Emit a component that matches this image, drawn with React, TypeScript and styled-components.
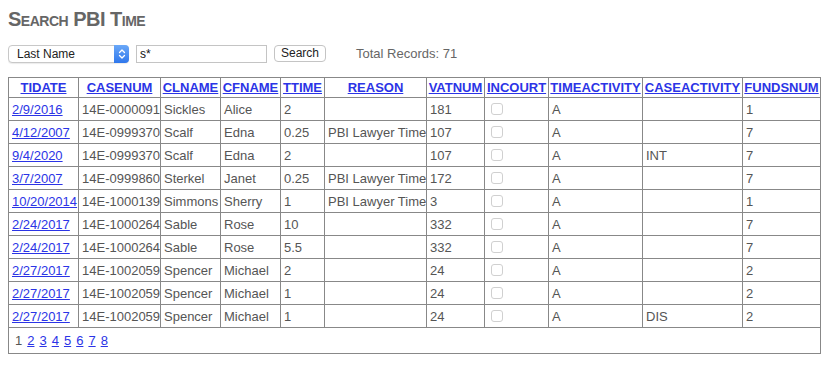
import styled, { createGlobalStyle } from 'styled-components'

const GlobalStyle = createGlobalStyle`
  body {
    margin: 8px;
    background: #fff;
    font-family: "Liberation Sans", Arial, sans-serif;
    font-size: 13px;
    color: #555;
  }
`

const Title = styled.h2`
  margin: 0;
  font-size: 20px;
  font-weight: bold;
  font-variant: small-caps;
  letter-spacing: -0.5px;
  color: #666;
  line-height: 23px;
`

const Toolbar = styled.div`
  display: flex;
  align-items: center;
  margin-top: 13px;
  height: 19px;
`

const SelectWrap = styled.div`
  position: relative;
  width: 121px;
  height: 18px;
`

const Select = styled.select`
  appearance: none;
  -webkit-appearance: none;
  box-sizing: border-box;
  width: 100%;
  height: 100%;
  margin: 0;
  padding: 0 0 0 8px;
  border: 1px solid #c8c8c8;
  border-radius: 4px;
  background: #fff;
  font: 12px "Liberation Sans", Arial, sans-serif;
  color: #222;
  box-shadow: 0 1px 1px rgba(0, 0, 0, 0.08);
`

const SelectArrow = styled.span`
  position: absolute;
  top: 0;
  right: 0;
  width: 15px;
  height: 18px;
  border-radius: 0 4px 4px 0;
  background: linear-gradient(#6aa8f8, #2f77ec);
  display: flex;
  align-items: center;
  justify-content: center;
  pointer-events: none;
`

const TextInput = styled.input`
  box-sizing: border-box;
  width: 131px;
  height: 18px;
  margin: 0 0 0 7px;
  padding: 0 3px;
  border: 1px solid #c4c4c4;
  font: 12px "Liberation Sans", Arial, sans-serif;
  color: #111;
  outline: none;
`

const Button = styled.button`
  box-sizing: border-box;
  height: 17px;
  margin-left: 7px;
  padding: 0 6px;
  border: 1px solid #c4c4c4;
  border-radius: 4px;
  background: #fff;
  font: 12px "Liberation Sans", Arial, sans-serif;
  color: #222;
  line-height: 15px;
`

const Total = styled.span`
  margin-left: 30px;
  color: #666;
  font-size: 13px;
`

const Table = styled.table`
  margin-top: 14px;
  width: 813px;
  table-layout: fixed;
  border-collapse: collapse;
  border: 1px solid #888;
`

const Th = styled.th`
  height: 19px;
  padding: 0 1px;
  border: 1px solid #888;
  text-align: center;
  font-weight: bold;
  white-space: nowrap;
  overflow: hidden;
`

const Td = styled.td`
  height: 22px;
  padding: 0 0 0 3px;
  border: 1px solid #888;
  color: #555;
  white-space: nowrap;
  overflow: hidden;
  vertical-align: middle;
`

const PagerCell = styled.td`
  height: 25px;
  padding: 0 0 0 6px;
  border: 1px solid #888;
  color: #555;
`

const Link = styled.a<{ $bold?: boolean }>`
  color: #2b34e6;
  text-decoration: underline;
  font-weight: ${(p) => (p.$bold ? 'bold' : 'normal')};
  cursor: pointer;
`

const PageLink = styled.a<{ $current?: boolean }>`
  margin-right: 5px;
  color: ${(p) => (p.$current ? '#555' : '#2b34e6')};
  text-decoration: ${(p) => (p.$current ? 'none' : 'underline')};
`

const Check = styled.span`
  display: block;
  box-sizing: border-box;
  width: 12px;
  height: 12px;
  margin-left: 3px;
  border: 1px solid #d0d0d0;
  border-radius: 3px;
  background: #fff;
`

const columns = [
  { key: 'TIDATE', w: 70 },
  { key: 'CASENUM', w: 82 },
  { key: 'CLNAME', w: 60 },
  { key: 'CFNAME', w: 60 },
  { key: 'TTIME', w: 44 },
  { key: 'REASON', w: 102 },
  { key: 'VATNUM', w: 58 },
  { key: 'INCOURT', w: 64 },
  { key: 'TIMEACTIVITY', w: 94 },
  { key: 'CASEACTIVITY', w: 100 },
  { key: 'FUNDSNUM', w: 78 },
]

type Row = [string, string, string, string, string, string, string, string, string, string]

const rows: Row[] = [
  ['2/9/2016', '14E-0000091', 'Sickles', 'Alice', '2', '', '181', 'A', '', '1'],
  ['4/12/2007', '14E-0999370', 'Scalf', 'Edna', '0.25', 'PBI Lawyer Time', '107', 'A', '', '7'],
  ['9/4/2020', '14E-0999370', 'Scalf', 'Edna', '2', '', '107', 'A', 'INT', '7'],
  ['3/7/2007', '14E-0999860', 'Sterkel', 'Janet', '0.25', 'PBI Lawyer Time', '172', 'A', '', '7'],
  ['10/20/2014', '14E-1000139', 'Simmons', 'Sherry', '1', 'PBI Lawyer Time', '3', 'A', '', '1'],
  ['2/24/2017', '14E-1000264', 'Sable', 'Rose', '10', '', '332', 'A', '', '7'],
  ['2/24/2017', '14E-1000264', 'Sable', 'Rose', '5.5', '', '332', 'A', '', '7'],
  ['2/27/2017', '14E-1002059', 'Spencer', 'Michael', '2', '', '24', 'A', '', '2'],
  ['2/27/2017', '14E-1002059', 'Spencer', 'Michael', '1', '', '24', 'A', '', '2'],
  ['2/27/2017', '14E-1002059', 'Spencer', 'Michael', '1', '', '24', 'A', 'DIS', '2'],
]

function App() {
  return (
    <>
      <GlobalStyle />
      <Title>Search PBI Time</Title>
      <Toolbar>
        <SelectWrap>
          <Select defaultValue='last'>
            <option value='last'>Last Name</option>
            <option value='first'>First Name</option>
            <option value='case'>Case Number</option>
          </Select>
          <SelectArrow>
            <svg width='8' height='12' viewBox='0 0 8 12' fill='none' stroke='#fff' strokeWidth='1.3' strokeLinecap='round' strokeLinejoin='round'>
              <path d='M1.5 4.5 L4 2 L6.5 4.5' />
              <path d='M1.5 7.5 L4 10 L6.5 7.5' />
            </svg>
          </SelectArrow>
        </SelectWrap>
        <TextInput defaultValue='s*' />
        <Button>Search</Button>
        <Total>Total Records: 71</Total>
      </Toolbar>
      <Table>
        <colgroup>
          {columns.map((c) => (
            <col key={c.key} style={{ width: c.w }} />
          ))}
        </colgroup>
        <thead>
          <tr>
            {columns.map((c) => (
              <Th key={c.key}>
                <Link $bold>{c.key}</Link>
              </Th>
            ))}
          </tr>
        </thead>
        <tbody>
          {rows.map((r, i) => (
            <tr key={i}>
              <Td>
                <Link>{r[0]}</Link>
              </Td>
              <Td>{r[1]}</Td>
              <Td>{r[2]}</Td>
              <Td>{r[3]}</Td>
              <Td>{r[4]}</Td>
              <Td>{r[5]}</Td>
              <Td>{r[6]}</Td>
              <Td>
                <Check />
              </Td>
              <Td>{r[7]}</Td>
              <Td>{r[8]}</Td>
              <Td>{r[9]}</Td>
            </tr>
          ))}
          <tr>
            <PagerCell colSpan={11}>
              {[1, 2, 3, 4, 5, 6, 7, 8].map((n) => (
                <PageLink key={n} $current={n === 1}>
                  {n}
                </PageLink>
              ))}
            </PagerCell>
          </tr>
        </tbody>
      </Table>
    </>
  )
}

export default App
